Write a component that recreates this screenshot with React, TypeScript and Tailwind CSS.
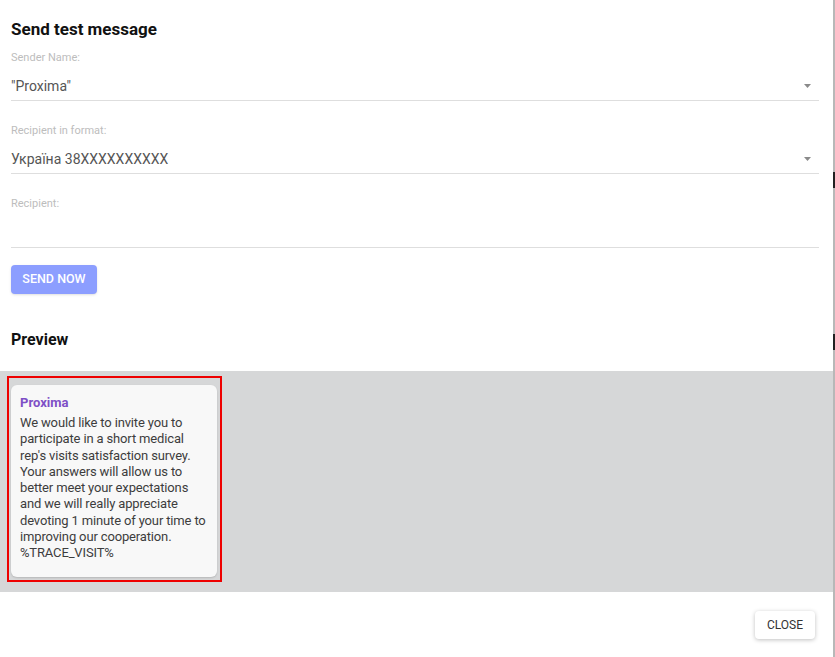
function SelectField({ label, value, arrow }: { label: string; value?: string; arrow?: boolean }) {
  return (
    <div className="flex flex-col">
      <div className="text-[11px] leading-[14px] text-[#bdbdbd]">{label}</div>
      <div className="flex items-end justify-between h-[36px] border-b border-[#dedede] pr-[8px] pb-[6px]">
        <span className="text-[14px] leading-[16px] text-[#555]">{value ?? ''}</span>
        {arrow && (
          <svg width="7" height="4" viewBox="0 0 7 4" className="mb-[6px]">
            <path d="M0 0h7L3.5 4z" fill="#8a8a8a" />
          </svg>
        )}
      </div>
    </div>
  );
}

export default function App() {
  const message =
    "We would like to invite you to participate in a short medical rep's visits satisfaction survey. Your answers will allow us to better meet your expectations and we will really appreciate devoting 1 minute of your time to improving our cooperation. %TRACE_VISIT%";

  return (
    <div className="flex w-[835px] h-[657px] bg-white font-['Roboto',sans-serif] overflow-hidden">
      <div className="flex flex-col w-[833px]">
        {/* Form */}
        <div className="flex flex-col px-[11px] pr-[14px]">
          <h2 className="text-[17px] font-bold text-[#111] mt-[17px] leading-[24px]">
            Send test message
          </h2>
          <div className="mt-[10px] flex flex-col gap-[23px]">
            <SelectField label="Sender Name:" value={'"Proxima"'} arrow />
            <SelectField label="Recipient in format:" value="Україна 38XXXXXXXXXX" arrow />
            <div className="flex flex-col">
              <div className="text-[11px] leading-[14px] text-[#bdbdbd]">Recipient:</div>
              <div className="h-[37px] border-b border-[#dedede]" />
            </div>
          </div>
          <button className="mt-[17px] self-start w-[86px] h-[29px] rounded-[4px] bg-[#8c9eff] text-white text-[12.5px] font-medium uppercase shadow-sm">
            Send now
          </button>
          <h3 className="mt-[35px] text-[16px] font-bold text-[#111] leading-[22px]">
            Preview
          </h3>
        </div>

        {/* Preview area */}
        <div className="mt-[20px] h-[221px] bg-[#d6d7d8] pt-[5px] pl-[7px]">
          <div className="w-[215px] h-[206px] border-2 border-[#ee0000] p-[7px] pl-[2px] pt-[7px]">
            <div className="w-[206px] h-[192px] rounded-[6px] bg-[#f8f8f8] shadow-[0_1px_2px_rgba(0,0,0,0.15)] px-[9px] pt-[9px]">
              <div className="text-[13px] font-bold text-[#7e4fc6] leading-[18px]">Proxima</div>
              <div className="text-[13px] text-[#3d3d3d] leading-[16.25px] mt-[3px] tracking-[-0.15px]">{message}</div>
            </div>
          </div>
        </div>

        {/* Footer */}
        <div className="flex justify-end pr-[18px] pt-[19px]">
          <button className="w-[60px] h-[28px] rounded-[4px] bg-white text-[12px] text-[#333] shadow-[0_1px_4px_rgba(0,0,0,0.25)]">
            CLOSE
          </button>
        </div>
      </div>
      <div className="w-[2px] bg-[#b8b8b8] flex flex-col">
        <div className="h-[172px]" />
        <div className="h-[16px] bg-[#222]" />
        <div className="h-[146px]" />
        <div className="h-[16px] bg-[#222]" />
      </div>
    </div>
  );
}
